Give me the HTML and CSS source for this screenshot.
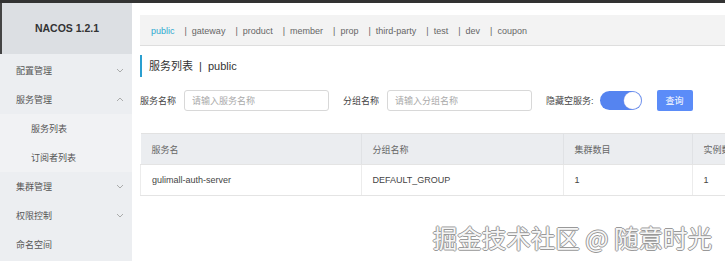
FILE: index.html
```html
<!DOCTYPE html>
<html lang="zh-CN">
<head>
    <meta charset="UTF-8">
    <meta name="viewport" content="width=device-width, initial-scale=1.0">
    <title>Nacos</title>
    <link rel="stylesheet" href="styles.css">
</head>
<body>
    <div class="layout">
        <aside class="sidebar">
            <div class="logo">NACOS 1.2.1</div>
            <ul class="menu">
                <li class="menu-item">配置管理 <svg class="arrow" viewBox="0 0 8 5"><path d="M1 1 L4 4 L7 1"/></svg></li>
                <li class="menu-item">服务管理 <svg class="arrow" viewBox="0 0 8 5"><path d="M1 4 L4 1 L7 4"/></svg></li>
                <li class="menu-item sub">服务列表</li>
                <li class="menu-item sub">订阅者列表</li>
                <li class="menu-item">集群管理 <svg class="arrow" viewBox="0 0 8 5"><path d="M1 1 L4 4 L7 1"/></svg></li>
                <li class="menu-item">权限控制 <svg class="arrow" viewBox="0 0 8 5"><path d="M1 1 L4 4 L7 1"/></svg></li>
                <li class="menu-item">命名空间</li>
            </ul>
        </aside>

        <main class="content">
            <div class="namespaces">
                <span class="ns active">public</span>
                <span class="ns">|&nbsp; gateway</span>
                <span class="ns">|&nbsp; product</span>
                <span class="ns">|&nbsp; member</span>
                <span class="ns">|&nbsp; prop</span>
                <span class="ns">|&nbsp; third-party</span>
                <span class="ns">|&nbsp; test</span>
                <span class="ns">|&nbsp; dev</span>
                <span class="ns">|&nbsp; coupon</span>
            </div>

            <div class="page-title">服务列表 <span class="sep">|</span> public</div>

            <div class="search">
                <label class="field-label">服务名称</label>
                <input class="field" type="text" placeholder="请输入服务名称">
                <label class="field-label">分组名称</label>
                <input class="field" type="text" placeholder="请输入分组名称">
                <label class="field-label">隐藏空服务:</label>
                <span class="switch"><span class="knob"></span></span>
                <button class="btn">查询</button>
            </div>

            <div class="table-wrap">
                <table class="table">
                    <thead>
                        <tr>
                            <th class="col-name">服务名</th>
                            <th class="col-group">分组名称</th>
                            <th class="col-cluster">集群数目</th>
                            <th class="col-inst">实例数</th>
                        </tr>
                    </thead>
                    <tbody>
                        <tr>
                            <td>gulimall-auth-server</td>
                            <td>DEFAULT_GROUP</td>
                            <td>1</td>
                            <td>1</td>
                        </tr>
                    </tbody>
                </table>
            </div>

            <div class="watermark">掘金技术社区 @ 随意时光</div>
        </main>
    </div>
</body>
</html>
```

FILE: styles.css
```css
body {
    margin: 0;
    font-family: "Liberation Sans", "Noto Sans CJK SC", sans-serif;
    font-size: 9px;
    color: #333;
    background: #fff;
    border-top: 3px solid #333;
    overflow: hidden;
}
.layout {
    display: flex;
    height: 258px;
}
.sidebar {
    width: 132px;
    flex-shrink: 0;
    background-color: #eceef1;
}
.logo {
    height: 51px;
    line-height: 51px;
    text-align: center;
    background-color: #dcdfe3;
    font-weight: bold;
    font-size: 10.5px;
    color: #333;
    border-left: 2px solid #444;
}
.menu {
    list-style: none;
    margin: 0;
    padding: 2px 0 0;
}
.menu-item {
    display: flex;
    align-items: center;
    justify-content: space-between;
    height: 29px;
    padding: 0 8px 0 16px;
    color: #555;
}
.menu-item.sub {
    padding-left: 31px;
    background-color: #f1f2f4;
}
.arrow {
    width: 8px;
    height: 5px;
    fill: none;
    stroke: #999;
    stroke-width: 0.8;
}
.content {
    flex: 1;
    min-width: 0;
    padding: 12px 0 0 8px;
    position: relative;
}
.namespaces {
    height: 31px;
    display: flex;
    align-items: center;
    gap: 10px;
    padding: 2px 0 0 11px;
    background-color: #f3f3f3;
    border-bottom: 1px solid #dedede;
    box-sizing: border-box;
    color: #666;
}
.ns.active {
    color: #2fa8d0;
}
.page-title {
    margin-top: 9px;
    height: 22px;
    line-height: 22px;
    border-left: 2px solid #2a9fd0;
    padding-left: 7px;
    font-size: 11px;
    color: #333;
}
.page-title .sep {
    margin: 0 3px;
}
.search {
    display: flex;
    align-items: center;
    margin-top: 13px;
    height: 21px;
}
.field-label {
    color: #444;
    margin-right: 8px;
}
.field {
    width: 145px;
    height: 21px;
    box-sizing: border-box;
    border: 1px solid #d8d8d8;
    border-radius: 3px;
    padding: 0 7px;
    font-family: inherit;
    font-size: 9px;
    margin-right: 14px;
}
.field::placeholder {
    color: #aaa;
}
.switch {
    width: 42px;
    height: 19px;
    border-radius: 10px;
    background-color: #5584f0;
    position: relative;
    margin-right: 15px;
    margin-left: -2px;
}
.knob {
    position: absolute;
    right: 1px;
    top: 1px;
    width: 17px;
    height: 17px;
    border-radius: 50%;
    background: #fff;
    box-shadow: 0 0 0 0.5px #9aa8e8;
}
.btn {
    width: 36px;
    height: 21px;
    border: none;
    border-radius: 2px;
    background-color: #5b8cf8;
    color: #fff;
    font-family: inherit;
    font-size: 9px;
    padding: 0;
}
.table-wrap {
    margin-top: 22px;
    overflow: hidden;
}
.table {
    border-collapse: collapse;
    table-layout: fixed;
    width: 640px;
}
.table th,
.table td {
    height: 30px;
    padding: 0 11px;
    text-align: left;
    font-weight: normal;
    white-space: nowrap;
    overflow: hidden;
    border-bottom: 1px solid #e4e4e4;
}
.table th {
    background-color: #ebedf0;
    color: #666;
    border-top: 1px solid #e2e2e2;
    border-right: 1px solid #e0e2e5;
}
.table td {
    color: #444;
    border-right: 1px solid #ececec;
}
.table td:first-child {
    border-left: 1px solid #ececec;
}
.col-name { width: 198px; }
.col-group { width: 179px; }
.col-cluster { width: 106px; }
.col-inst { width: 80px; }
.watermark {
    position: absolute;
    right: 13px;
    top: 217px;
    font-family: "Noto Sans CJK SC", sans-serif;
    font-size: 24.5px;
    color: #f6f6f6;
    text-shadow: -1px 0 #999, 1px 0 #999, 0 -1px #999, 0 1px #999;
    white-space: nowrap;
}
```
